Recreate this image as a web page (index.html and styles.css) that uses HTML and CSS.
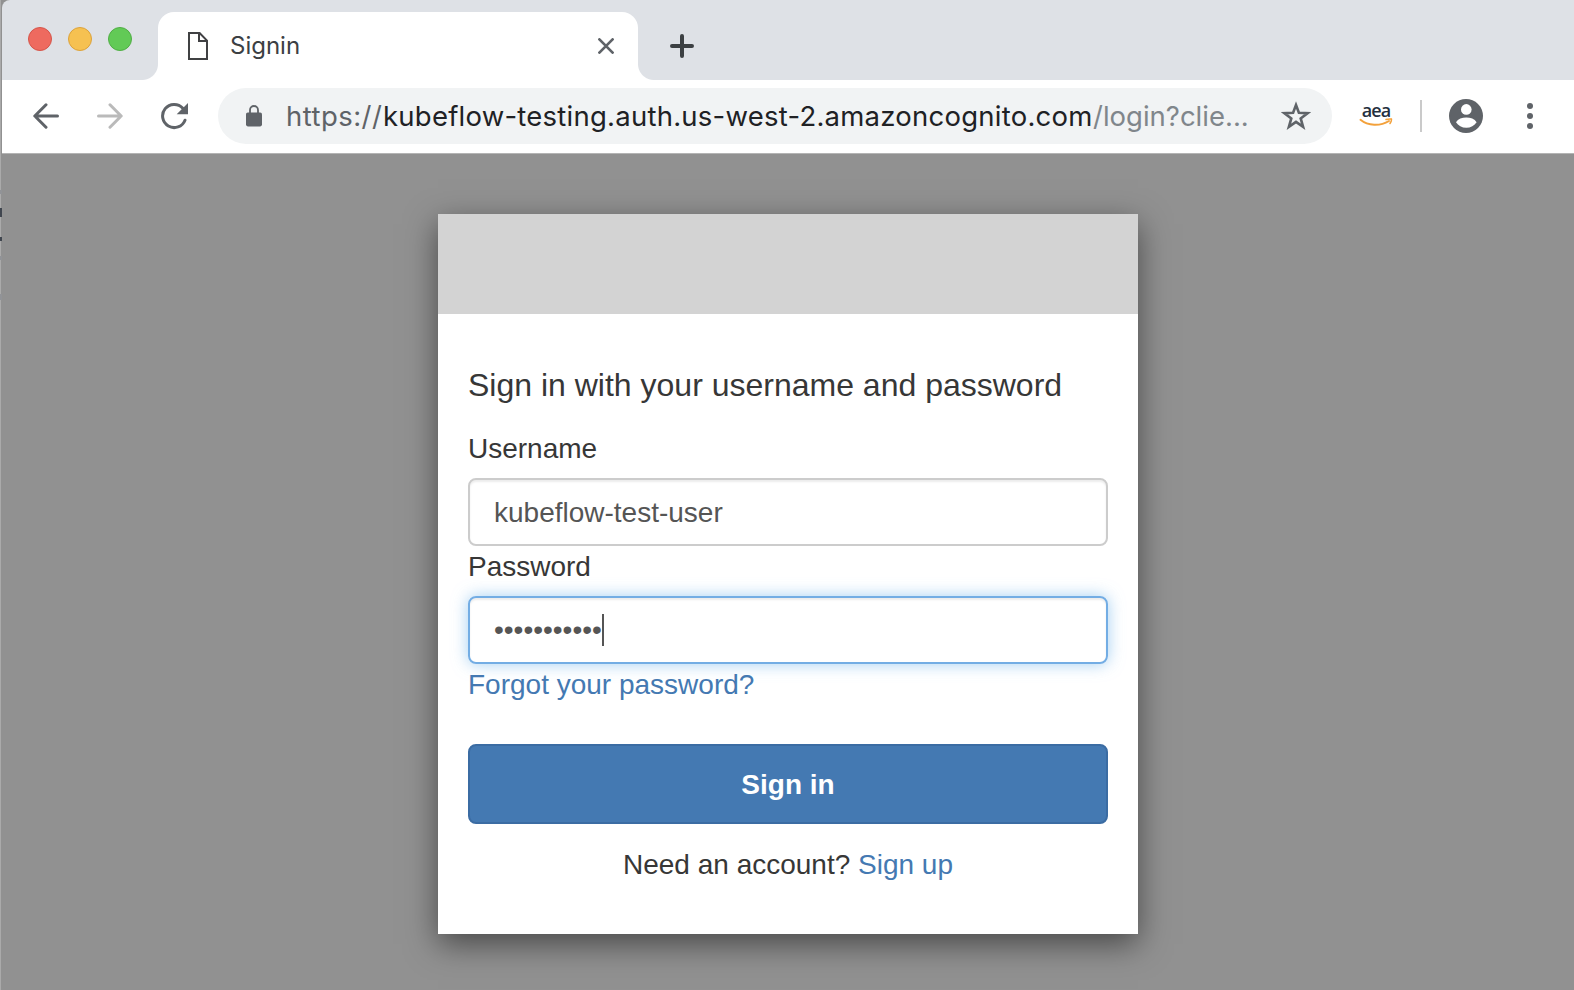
FILE: index.html
```html
<!DOCTYPE html>
<html lang="en">
<head>
<meta charset="utf-8">
<title>Signin</title>
<link rel="stylesheet" href="styles.css">
</head>
<body>
<div class="window">
  <header class="tabstrip">
    <div class="lights"><i class="light red"></i><i class="light yellow"></i><i class="light green"></i></div>
    <div class="tab">
      <svg class="doc" width="20" height="28" viewBox="0 0 20 28" fill="none" stroke="#404143" stroke-width="2"><path d="M1 1h10.6L19 8.6V27H1z"/><path d="M11 1v8h8"/></svg>
      <span class="tab-title">Signin</span>
      <svg class="close" width="16" height="16" viewBox="0 0 16 16" stroke="#5f6368" stroke-width="2.7" stroke-linecap="round"><path d="M1.4 1.4l13.2 13.2M14.6 1.4L1.4 14.6"/></svg>
    </div>
    <svg class="plus" width="24" height="24" viewBox="0 0 24 24" stroke="#3c4043" stroke-width="4" stroke-linecap="round"><path d="M12 2v20M2 12h20"/></svg>
  </header>
  <nav class="toolbar">
    <svg class="back" width="26" height="26" viewBox="0 0 26 26" fill="none" stroke="#5f6368" stroke-width="3" stroke-linecap="round" stroke-linejoin="round"><path d="M24.5 13H2M13 1.8L1.8 13 13 24.2"/></svg>
    <svg class="forward" width="26" height="26" viewBox="0 0 26 26" fill="none" stroke="#bababa" stroke-width="3" stroke-linecap="round" stroke-linejoin="round"><path d="M1.5 13H24M13 1.8L24.2 13 13 24.2"/></svg>
    <svg class="reload" width="28" height="28" viewBox="0 0 28 28"><path d="M25 18.2A11.6 11.6 0 1 1 22.8 6.2" fill="none" stroke="#5f6368" stroke-width="3" stroke-linecap="round"/><path d="M28 1v11.2H16.700z" fill="#5f6368"/></svg>
    <div class="omnibox">
      <svg class="lock" width="16" height="22" viewBox="0 0 16 22"><rect y="7.4" width="16" height="14" rx="1.8" fill="#5f6368"/><path d="M4 9V5a4 4 0 0 1 8 0v4" fill="none" stroke="#5f6368" stroke-width="1.8"/></svg>
      <span class="url"><span class="scheme">https://</span><span class="host">kubeflow-testing.auth.us-west-2.amazoncognito.com</span><span class="path">/login?clie...</span></span>
      <svg class="star" width="30" height="30" viewBox="0 0 30 30" fill="none" stroke="#5f6368" stroke-width="2.6"><path d="M15 4l2.9 7.8 8.6.4-6.8 5.2 2.4 8.4-7.1-4.9-7.1 4.9 2.4-8.4-6.8-5.2 8.6-.4z"/></svg>
    </div>
    <div class="aea"><span class="aea-text">aea</span>
      <svg width="34" height="10" viewBox="0 0 34 10" fill="none" stroke="#f3a13b" stroke-linecap="round"><path d="M1.500 1.800C9 8 21 8.500 30 3" stroke-width="2"/><path d="M27 1.500q3.200-.9 5.400-.5.4 1.700-1.400 4.500" stroke-width="1.500"/></svg>
    </div>
    <i class="divider"></i>
    <svg class="avatar" width="34" height="34" viewBox="0 0 34 34"><circle cx="17" cy="17" r="17" fill="#5f6368"/><circle cx="17.300" cy="10.400" r="5.300" fill="#fff"/><path d="M7 23.200c2-3.300 6.100-4.700 10.300-4.700s8.300 1.400 10.300 4.700c-2.200 3.400-5.900 5.600-10.300 5.600S9.200 26.600 7 23.200z" fill="#fff"/></svg>
    <svg class="dots" width="6" height="26" viewBox="0 0 6 26" fill="#5f6368"><circle cx="3" cy="3" r="3"/><circle cx="3" cy="13" r="3"/><circle cx="3" cy="23" r="3"/></svg>
  </nav>
  <main class="page">
    <div class="modal">
      <div class="banner"></div>
      <form class="form">
        <div class="heading">Sign in with your username and password</div>
        <div class="label">Username</div>
        <div class="input">kubeflow-test-user</div>
        <div class="label">Password</div>
        <div class="input focused">•••••••••••<i class="caret"></i></div>
        <a class="forgot">Forgot your password?</a>
        <div class="submit">Sign in</div>
        <div class="signup">Need an account? <a>Sign up</a></div>
      </form>
    </div>
  </main>
</div>
<div class="edge"><i class="m1"></i><i class="m2"></i><i class="m3"></i><i class="m4"></i><i class="m5"></i></div>
</body>
</html>
```
FILE: styles.css
```css
* { box-sizing: border-box; }
body { margin: 0; background: #919191; font-family: "Liberation Sans", Arial, sans-serif; }
svg { display: block; flex: none; }
.window { width: 1574px; height: 990px; padding-left: 2px; overflow: hidden; display: flex; flex-direction: column; }
.tabstrip { height: 80px; flex: none; background: #dee1e6; display: flex; border-top-left-radius: 8px; }
.lights { display: flex; gap: 16px; padding: 27px 0 0 26px; width: 156px; }
.light { width: 24px; height: 24px; border-radius: 50%; border: 1px solid; }
.red { background: #ee6a5f; border-color: #d5554a; }
.yellow { background: #f6c151; border-color: #dca23c; }
.green { background: #62ca56; border-color: #50ae45; }
.tab { position: relative; width: 480px; height: 68px; margin-top: 12px; background: #fff; border-radius: 16px 16px 0 0; display: flex; align-items: flex-start; padding-left: 30px; }
.tab::before, .tab::after { content: ""; position: absolute; bottom: 0; width: 16px; height: 16px; }
.tab::before { left: -16px; background: radial-gradient(circle at 0 0, #dee1e6 15.500px, #fff 16.500px); }
.tab::after { right: -16px; background: radial-gradient(circle at 100% 0, #dee1e6 15.500px, #fff 16.500px); }
.doc { margin-top: 20px; }
.tab-title { font: 24px/34px Inter, sans-serif; color: #3c4043; margin: 17px 0 0 22px; flex: 1; }
.close { margin: 26px 24px 0 0; }
.plus { margin: 34px 0 0 32px; }
.toolbar { height: 74px; flex: none; background: #fff; border-bottom: 1px solid #b4b4b4; display: flex; align-items: center; padding: 0 40px 1px 31px; }
.forward { margin-left: 38px; }
.reload { margin-left: 37px; }
.omnibox { width: 1114px; height: 56px; margin-left: 30px; border-radius: 28px; background: #f1f3f4; display: flex; align-items: center; padding: 0 21px 0 28px; }
.url { font: 27.5px/40px Inter, sans-serif; margin: 0 0 1px 24px; white-space: nowrap; display: flex; flex: 1; }
.scheme { color: #5f6368; width: 97px; letter-spacing: .45px; }
.host { color: #202124; width: 710px; letter-spacing: .24px; }
.path { color: #80868b; }
.aea { width: 34px; margin: 0 1px 2px 27px; text-align: center; }
.aea-text { display: block; font: 600 18px/16px "Open Sans", sans-serif; letter-spacing: -1px; color: #252f3e; }
.divider { width: 2px; height: 32px; background: #cacaca; margin-left: 26px; }
.avatar { margin-left: 27px; }
.dots { margin-left: 44px; }
.page { flex: 1; padding: 60px 0 0 436px; }
.modal { width: 700px; height: 720px; background: #fff; box-shadow: 0 10px 30px rgba(0,0,0,.5); }
.banner { height: 100px; background: #d3d3d3; }
.form { padding: 49px 30px 0; font-size: 28px; line-height: 40px; color: #373737; }
.heading { font-size: 32px; line-height: 44px; margin-bottom: 21px; }
.label { padding-top: 1px; height: 40px; margin-bottom: 10px; }
.input { height: 68px; border: 2px solid #ccc; border-radius: 8px; box-shadow: inset 0 2px 2px rgba(0,0,0,.075); padding: 13px 24px 11px; color: #555; display: flex; }
.focused { padding-top: 12px; border-color: #73ade4; box-shadow: inset 0 2px 2px rgba(0,0,0,.075), 0 0 16px rgba(102,175,233,.6); }
.caret { width: 2px; height: 32px; margin-top: 4px; background: #555; }
a { color: #4479b2; }
.forgot { display: block; padding-top: 1px; height: 40px; }
.submit { height: 80px; margin: 40px 0 21px; background: #4479b2; border: 2px solid #3b6ca3; border-radius: 8px; color: #fff; font-weight: 700; text-align: center; line-height: 78px; }
.signup { text-align: center; }
.edge { position: absolute; left: 0; top: 0; width: 2px; height: 990px; background: linear-gradient(90deg, #aaa 50%, #919191 50%); }
.edge i { position: absolute; left: 0; width: 2px; height: 4px; background: #919397; }
.edge .m1 { top: 190px; }
.edge .m2 { top: 208px; height: 9px; background: #40464f; }
.edge .m3 { top: 237px; background: #40464f; }
.edge .m4 { top: 256px; }
.edge .m5 { top: 294px; height: 6px; }
```
